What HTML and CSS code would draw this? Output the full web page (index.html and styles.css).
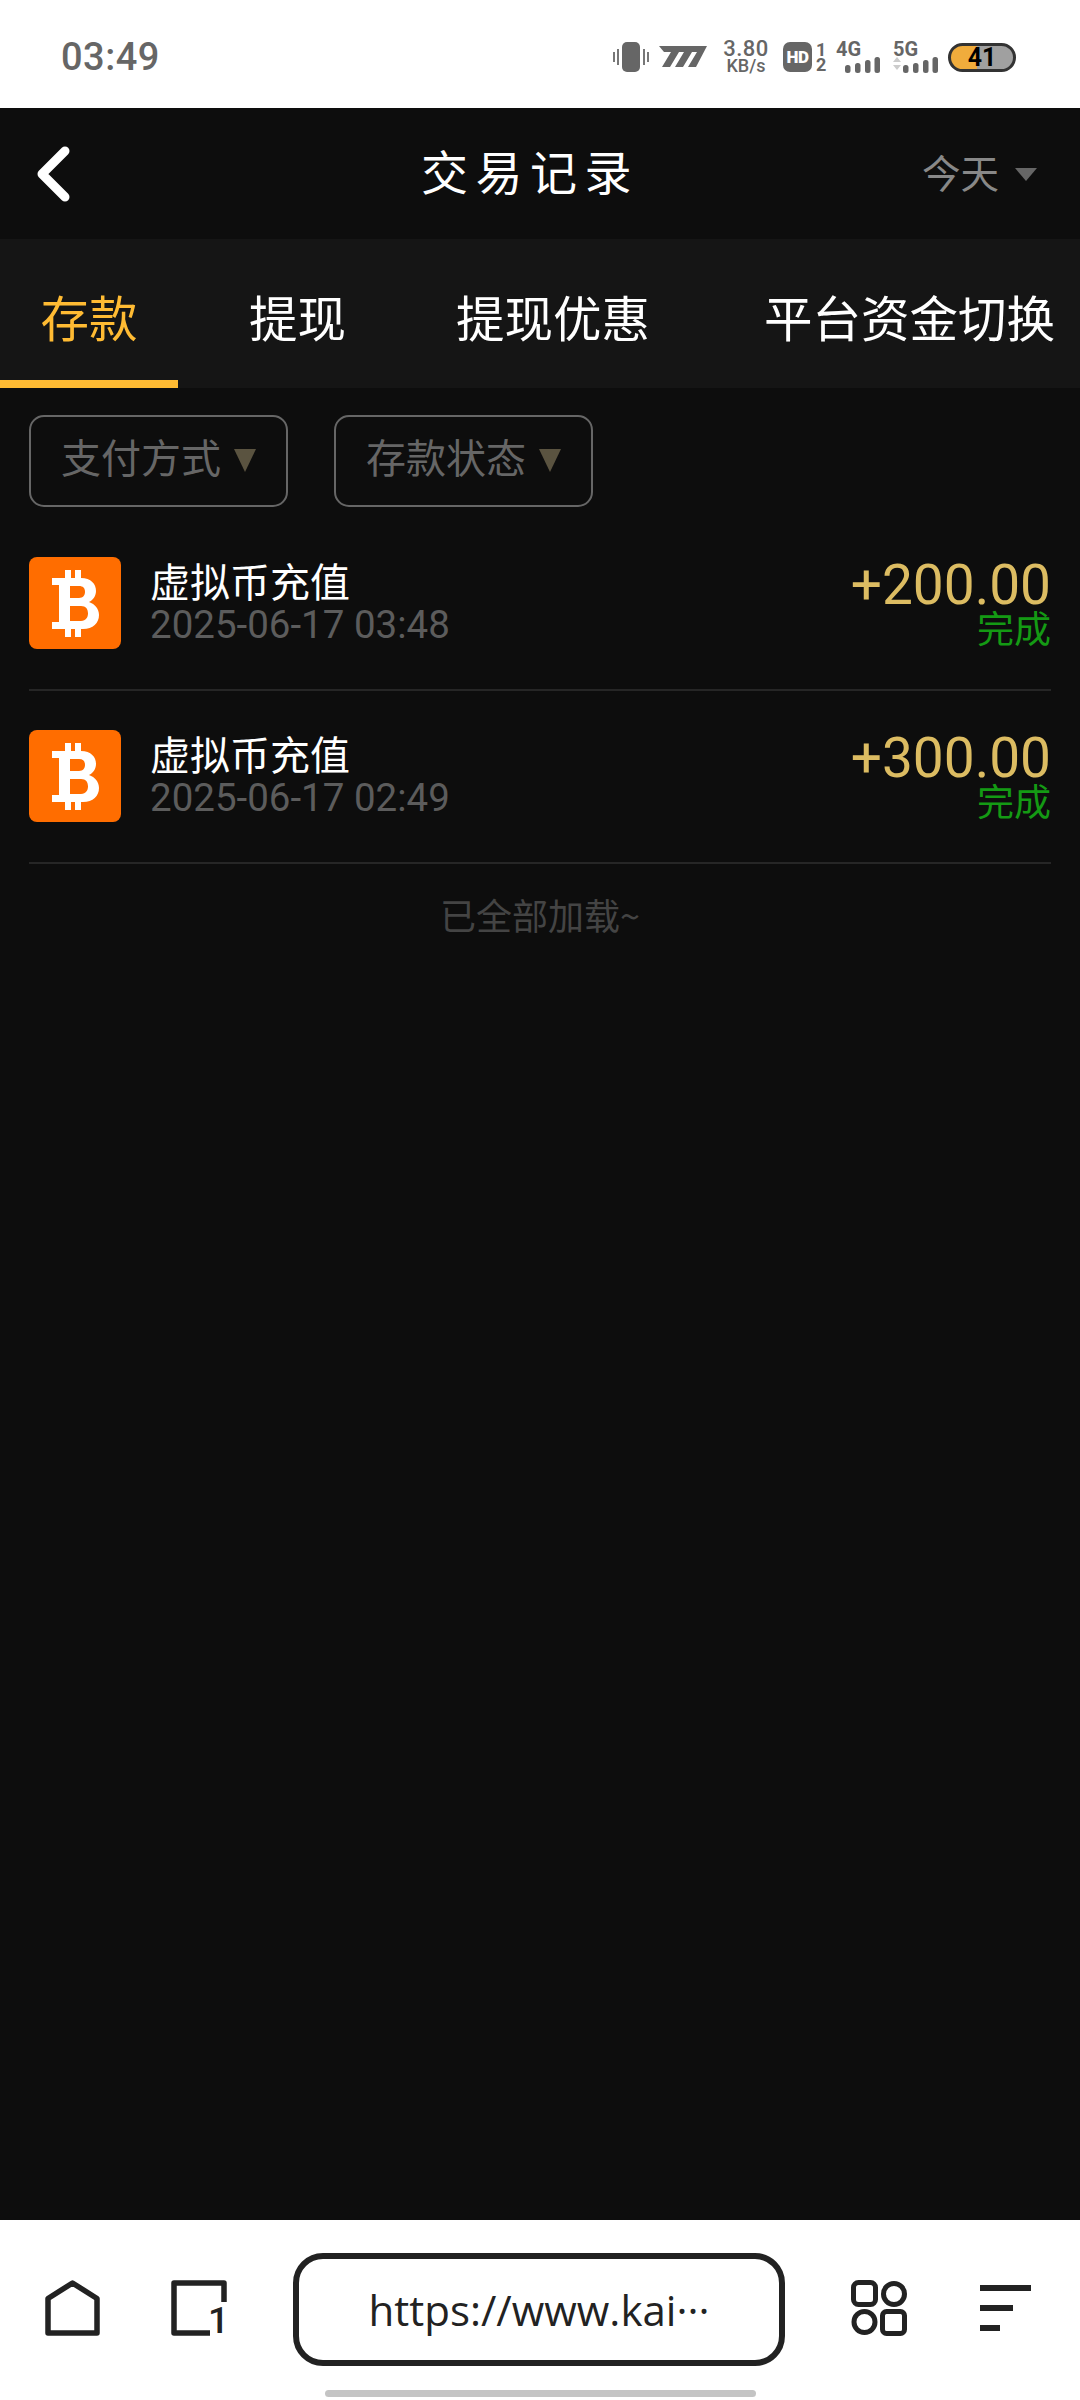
FILE: index.html
```html
<!DOCTYPE html>
<html lang="zh-CN">
<head>
    <meta charset="UTF-8">
    <meta name="viewport" content="width=device-width, initial-scale=1.0">
    <title>交易记录</title>
    <link rel="stylesheet" href="styles.css">
</head>
<body>
    <div class="status-bar">
        <span class="time">03:49</span>
        <div class="status-icons">
            <svg class="ic-vibrate" width="36" height="30" viewBox="0 0 36 30">
                <rect x="9" y="0" width="18" height="30" rx="5" fill="#666"/>
                <rect x="0" y="10" width="2" height="10" fill="#777"/>
                <rect x="4" y="7" width="2" height="16" fill="#777"/>
                <rect x="30" y="7" width="2" height="16" fill="#777"/>
                <rect x="34" y="10" width="2" height="10" fill="#777"/>
            </svg>
            <svg class="ic-speed" width="48" height="22" viewBox="0 0 48 22">
                <path d="M0 0H48L37 21H29L38 6H33L24 21H16L25 6H20L11 21H3L12 6H5Z" fill="#666"/>
            </svg>
            <div class="net-speed">
                <span class="net-value">3.80</span>
                <span class="net-unit">KB/s</span>
            </div>
            <div class="hd">
                <span class="hd-badge">HD</span>
                <div class="hd-sim"><span>1</span><span>2</span></div>
            </div>
            <div class="signal signal-4g">
                <span class="signal-name">4G</span>
                <svg width="35" height="17" viewBox="0 0 35 17">
                    <rect x="0" y="9" width="5.500" height="8" rx="2.500" fill="#666"/>
                    <rect x="10" y="7" width="5.500" height="10" rx="2.500" fill="#666"/>
                    <rect x="20" y="4" width="5.500" height="13" rx="2.500" fill="#666"/>
                    <rect x="29.500" y="1" width="5.500" height="16" rx="2.500" fill="#666"/>
                </svg>
            </div>
            <div class="signal signal-5g">
                <span class="signal-name">5G</span>
                <svg width="45" height="17" viewBox="0 0 45 17">
                    <path d="M0 6L4 1L8 6ZM0 9H8L4 14Z" fill="#ccc"/>
                    <rect x="10" y="9" width="5.500" height="8" rx="2.500" fill="#666"/>
                    <rect x="20" y="7" width="5.500" height="10" rx="2.500" fill="#666"/>
                    <rect x="30" y="4" width="5.500" height="13" rx="2.500" fill="#666"/>
                    <rect x="39.500" y="1" width="5.500" height="16" rx="2.500" fill="#666"/>
                </svg>
            </div>
            <div class="battery"><span>41</span></div>
        </div>
    </div>

    <header class="top-bar">
        <svg class="back" width="33" height="56" viewBox="0 0 33 56">
            <path d="M28 5L5 28L28 51" fill="none" stroke="#fff" stroke-width="9" stroke-linecap="round" stroke-linejoin="round"/>
        </svg>
        <h1 class="page-title">交易记录</h1>
        <div class="date-pick">今天<i class="date-arrow"></i></div>
    </header>

    <nav class="tabs">
        <a class="tab active">存款</a>
        <a class="tab">提现</a>
        <a class="tab">提现优惠</a>
        <a class="tab">平台资金切换</a>
    </nav>

    <main class="content">
        <div class="filters">
            <div class="filter">支付方式<i class="filter-arrow"></i></div>
            <div class="filter">存款状态<i class="filter-arrow"></i></div>
        </div>

        <div class="record">
            <svg class="coin" width="92" height="92" viewBox="0 0 92 92">
                <rect width="92" height="92" rx="8" fill="#ff6d00"/>
                <path d="M36 13h6v9h-6zM46 13h6v9h-6zM36 71h6v9h-6zM46 71h6v9h-6z" fill="#fff"/>
                <path fill="#fff" fill-rule="evenodd" d="M23 21H52C62 21 67 27 67 34C67 39 64 43 60 45C66 47 70 52 70 58C70 66 64 72 54 72H23V65H30V28H23ZM41 29V41H50C54 41 56 38 56 35C56 31 54 29 50 29ZM41 49V64H52C57 64 59 60 59 56.500C59 52 57 49 52 49Z"/>
            </svg>
            <div class="record-main">
                <div class="record-name">虚拟币充值</div>
                <div class="record-date">2025-06-17 03:48</div>
            </div>
            <div class="record-side">
                <div class="record-amount">+200.00</div>
                <div class="record-status">完成</div>
            </div>
        </div>

        <div class="record">
            <svg class="coin" width="92" height="92" viewBox="0 0 92 92">
                <rect width="92" height="92" rx="8" fill="#ff6d00"/>
                <path d="M36 13h6v9h-6zM46 13h6v9h-6zM36 71h6v9h-6zM46 71h6v9h-6z" fill="#fff"/>
                <path fill="#fff" fill-rule="evenodd" d="M23 21H52C62 21 67 27 67 34C67 39 64 43 60 45C66 47 70 52 70 58C70 66 64 72 54 72H23V65H30V28H23ZM41 29V41H50C54 41 56 38 56 35C56 31 54 29 50 29ZM41 49V64H52C57 64 59 60 59 56.500C59 52 57 49 52 49Z"/>
            </svg>
            <div class="record-main">
                <div class="record-name">虚拟币充值</div>
                <div class="record-date">2025-06-17 02:49</div>
            </div>
            <div class="record-side">
                <div class="record-amount">+300.00</div>
                <div class="record-status">完成</div>
            </div>
        </div>

        <p class="load-end">已全部加载~</p>
    </main>

    <footer class="browser-bar">
        <div class="browser-row">
            <svg class="home" width="55" height="56" viewBox="0 0 55 56">
                <path d="M27.500 3L52 18.500V53H3V18.500Z" fill="none" stroke="#222" stroke-width="5.500" stroke-linejoin="round"/>
            </svg>
            <div class="pages">
                <svg width="56" height="56" viewBox="0 0 56 56">
                    <path d="M53 22V3H3V53H39" fill="none" stroke="#222" stroke-width="5.500" stroke-linejoin="round"/>
                </svg>
                <span class="pages-count">1</span>
            </div>
            <div class="url-box">https://www.kai···</div>
            <svg class="apps" width="56" height="56" viewBox="0 0 56 56">
                <rect x="2.500" y="2.500" width="22" height="22" rx="5" fill="none" stroke="#222" stroke-width="5"/>
                <circle cx="43" cy="14" r="10.500" fill="none" stroke="#222" stroke-width="5"/>
                <circle cx="13.500" cy="42" r="10.500" fill="none" stroke="#222" stroke-width="5"/>
                <rect x="31.500" y="31.500" width="22" height="22" rx="4" fill="none" stroke="#222" stroke-width="5"/>
            </svg>
            <div class="menu">
                <i class="menu-line long"></i>
                <i class="menu-line mid"></i>
                <i class="menu-line short"></i>
            </div>
        </div>
        <div class="home-bar"></div>
    </footer>
</body>
</html>
```

FILE: styles.css
```css
* {
    box-sizing: border-box;
}

body {
    margin: 0;
    width: 1080px;
    height: 2400px;
    display: flex;
    flex-direction: column;
    background: #0d0d0d;
    overflow: hidden;
    font-family: "Noto Sans CJK SC", sans-serif;
}

/* status bar */
.status-bar {
    height: 108px;
    flex: none;
    display: flex;
    align-items: center;
    padding: 6px 64px 0 61px;
    background: #fff;
    color: #666;
}

.time {
    font-family: Roboto, sans-serif;
    font-size: 38px;
    font-weight: 500;
    letter-spacing: 0.5px;
}

.status-icons {
    margin-left: auto;
    display: flex;
    align-items: center;
    font-family: Roboto, sans-serif;
}

.ic-speed {
    margin-left: 10px;
}

.net-speed {
    margin-left: 16px;
    width: 46px;
    display: flex;
    flex-direction: column;
    align-items: center;
    line-height: 17px;
}

.net-value {
    font-size: 22px;
    font-weight: 500;
    letter-spacing: 0.5px;
}

.net-unit {
    font-size: 18px;
    font-weight: 500;
}

.hd {
    margin-left: 14px;
    display: flex;
    align-items: center;
    gap: 4px;
}

.hd-badge {
    width: 29px;
    height: 30px;
    border-radius: 7px;
    background: #666;
    color: #fff;
    font-size: 17px;
    font-weight: 900;
    line-height: 30px;
    text-align: center;
    letter-spacing: -0.5px;
}

.hd-sim {
    display: flex;
    flex-direction: column;
    font-size: 18px;
    font-weight: 700;
    line-height: 15px;
    width: 10px;
}

.signal {
    display: flex;
    flex-direction: column;
    align-items: flex-start;
}

.signal svg {
    display: block;
    margin-top: -1px;
    align-self: flex-end;
}

.signal-name {
    font-size: 20px;
    font-weight: 700;
    line-height: 16px;
}

.signal-4g {
    margin-left: 10px;
    width: 44px;
}

.signal-5g {
    margin-left: 13px;
    width: 45px;
}

.battery {
    margin-left: 10px;
    width: 68px;
    height: 29px;
    border: 3px solid #333;
    border-radius: 15px;
    background: linear-gradient(to right, #f0ac3c 0, #f0ac3c 26px, #a0a0a0 26px);
    display: flex;
    align-items: center;
    justify-content: center;
    color: #000;
    font-size: 25px;
    font-weight: 700;
    line-height: 23px;
}

/* top bar */
.top-bar {
    height: 131px;
    flex: none;
    position: relative;
    display: flex;
    align-items: center;
    padding: 0 43px 0 37px;
    background: #0d0d0d;
}

.page-title {
    margin: 0 0 7px 351px;
    color: #fff;
    font-size: 47px;
    font-weight: 400;
    letter-spacing: 7.500px;
    line-height: 60px;
}

.date-pick {
    margin: 0 0 5px auto;
    display: flex;
    align-items: center;
    color: #888;
    font-size: 38.500px;
    line-height: 50px;
}

.date-arrow {
    margin: 6px 0 0 16px;
    border-top: 13px solid #666;
    border-left: 11px solid transparent;
    border-right: 11px solid transparent;
}

/* tabs */
.tabs {
    height: 149px;
    flex: none;
    display: flex;
    gap: 28px;
    background: #151515;
    overflow: hidden;
}

.tab {
    flex: none;
    height: 149px;
    padding: 12px 41px 0;
    display: flex;
    align-items: center;
    color: #fff;
    font-size: 48.500px;
    border-bottom: 8px solid transparent;
}

.tab:nth-child(2) {
    margin-left: 2px;
}

.tab:nth-child(4) {
    margin-left: 4px;
}

.tab.active {
    padding: 12px 40.500px 0;
    color: #ffbb33;
    border-bottom-color: #ffbb33;
}

/* list */
.content {
    flex: 1;
    padding: 27px 29px 0;
}

.filters {
    display: flex;
    gap: 46px;
    margin-bottom: 11px;
}

.filter {
    height: 92px;
    padding: 0 30px 10px 30px;
    display: flex;
    align-items: center;
    gap: 13px;
    border: 2.500px solid #666;
    border-radius: 15px;
    color: #666;
    font-size: 40px;
}

.filter-arrow {
    margin-top: 8px;
    border-top: 23px solid #5a5340;
    border-left: 11.500px solid transparent;
    border-right: 11.500px solid transparent;
}

.record {
    display: flex;
    align-items: center;
    padding: 39px 0 40px;
    border-bottom: 2px solid #262626;
}

.coin {
    flex: none;
    display: block;
}

.record-main {
    margin-left: 29px;
    padding-bottom: 2px;
}

.record-name {
    color: #fff;
    font-size: 40px;
    line-height: 46px;
}

.record-date {
    color: #5c5c5c;
    font-family: Roboto, sans-serif;
    font-size: 38.500px;
    line-height: 44px;
}

.record-side {
    margin-left: auto;
    padding-bottom: 3px;
    text-align: right;
}

.record-amount {
    color: #dcbc62;
    font-family: Roboto, sans-serif;
    font-size: 55px;
    line-height: 50px;
}

.record-status {
    color: #149a14;
    font-size: 37px;
    line-height: 34px;
}

.load-end {
    margin: 25px 0 0;
    color: #444;
    font-size: 36px;
    line-height: 50px;
    text-align: center;
}

/* browser bar */
.browser-bar {
    height: 180px;
    flex: none;
    background: #fff;
    display: flex;
    flex-direction: column;
    align-items: center;
    padding-top: 33px;
}

.browser-row {
    width: 100%;
    height: 113px;
    display: flex;
    align-items: center;
    padding: 0 49px 0 45px;
}

.home {
    margin-top: -3px;
}

.pages {
    position: relative;
    width: 56px;
    height: 56px;
    margin: -3px 0 0 71px;
}

.pages svg {
    display: block;
}

.pages-count {
    position: absolute;
    right: -2px;
    bottom: 0;
    color: #222;
    font-family: Roboto, sans-serif;
    font-size: 37px;
    font-weight: 500;
    line-height: 30px;
}

.url-box {
    width: 492px;
    height: 113px;
    margin-left: 66px;
    border: 6px solid #222;
    border-radius: 30px;
    display: flex;
    align-items: center;
    justify-content: center;
    color: #222;
    font-family: "Open Sans", sans-serif;
    font-size: 42px;
}

.apps {
    margin: -3px 0 0 66px;
}

.menu {
    margin: -3px 0 0 73px;
    width: 51px;
    display: flex;
    flex-direction: column;
    gap: 14px;
}

.menu-line {
    height: 6px;
    background: #222;
}

.menu-line.long {
    width: 51px;
}

.menu-line.mid {
    width: 33px;
}

.menu-line.short {
    width: 20px;
}

.home-bar {
    width: 431px;
    height: 7px;
    margin-top: 24px;
    border-radius: 4px;
    background: #c4c4c4;
}
```
